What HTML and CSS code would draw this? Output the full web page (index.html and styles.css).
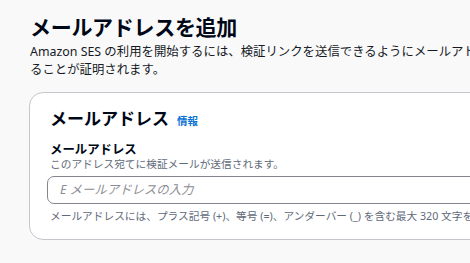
FILE: index.html
```html
<!DOCTYPE html>
<html lang="ja">
<head>
<meta charset="utf-8">
<link rel="stylesheet" href="styles.css">
</head>
<body>
<main class="page">
  <header class="page-header">
    <h1 class="page-title">メールアドレスを追加</h1>
    <p class="page-desc">Amazon SES の利用を開始するには、検証リンクを送信できるようにメールアドレスを追加してください。このアドレスを所有してい<br>ることが証明されます。</p>
  </header>
  <section class="card">
    <div class="card-head">
      <h2 class="card-title">メールアドレス</h2>
      <a class="info-link" href="#">情報</a>
    </div>
    <div class="field">
      <label class="field-label">メールアドレス</label>
      <div class="field-desc">このアドレス宛てに検証メールが送信されます。</div>
      <input class="field-input" type="text" placeholder="E メールアドレスの入力">
      <div class="field-hint">メールアドレスには、プラス記号 (+)、等号 (=)、アンダーバー (_) を含む最大 320 文字を使用できます。</div>
    </div>
  </section>
</main>
</body>
</html>
```
FILE: styles.css
```css
html, body {
  margin: 0;
  padding: 0;
  background: #f9f9fa;
  overflow: hidden;
}
body {
  font-family: "Noto Sans", "Noto Sans CJK JP", sans-serif;
  color: #000716;
  width: 470px;
  height: 263px;
}
.page {
  padding: 14px 0 0 30px;
  width: 800px;
}
.page-title {
  margin: 0;
  font-size: 21px;
  line-height: 26px;
  font-weight: 700;
  letter-spacing: -0.3px;
}
.page-desc {
  margin: 3px 0 0;
  font-size: 12.4px;
  line-height: 17.5px;
  color: #16191f;
  white-space: nowrap;
}
.card {
  margin-top: 14px;
  margin-left: -1px;
  width: 520px;
  background: #ffffff;
  border: 1px solid #c6c6cd;
  border-radius: 14px;
  padding: 15px 20px 16px 20px;
}
.card-head {
  display: flex;
  align-items: baseline;
  gap: 8px;
}
.card-title {
  margin: 0;
  font-size: 17px;
  line-height: 22px;
  font-weight: 700;
}
.info-link {
  font-size: 10.5px;
  font-weight: 700;
  color: #0972d3;
  text-decoration: none;
}
.field {
  margin-top: 12px;
  display: flex;
  flex-direction: column;
}
.field-label {
  font-size: 12.4px;
  line-height: 15px;
  font-weight: 700;
}
.field-desc {
  font-size: 10.7px;
  line-height: 14px;
  color: #5f6b7a;
}
.field-input {
  margin-top: 5px;
  margin-left: -3px;
  width: 460px;
  height: 27.5px;
  box-sizing: border-box;
  border: 1px solid #85858e;
  border-radius: 7px;
  padding: 0 12px;
  font-family: "Noto Sans", "Noto Sans CJK JP", sans-serif;
  font-size: 12.4px;
  background: #ffffff;
  outline: none;
}
.field-input::placeholder {
  font-style: italic;
  color: #8c8c94;
}
.field-hint {
  margin-top: 5px;
  font-size: 10.7px;
  line-height: 14px;
  color: #5f6b7a;
  white-space: nowrap;
}
```
